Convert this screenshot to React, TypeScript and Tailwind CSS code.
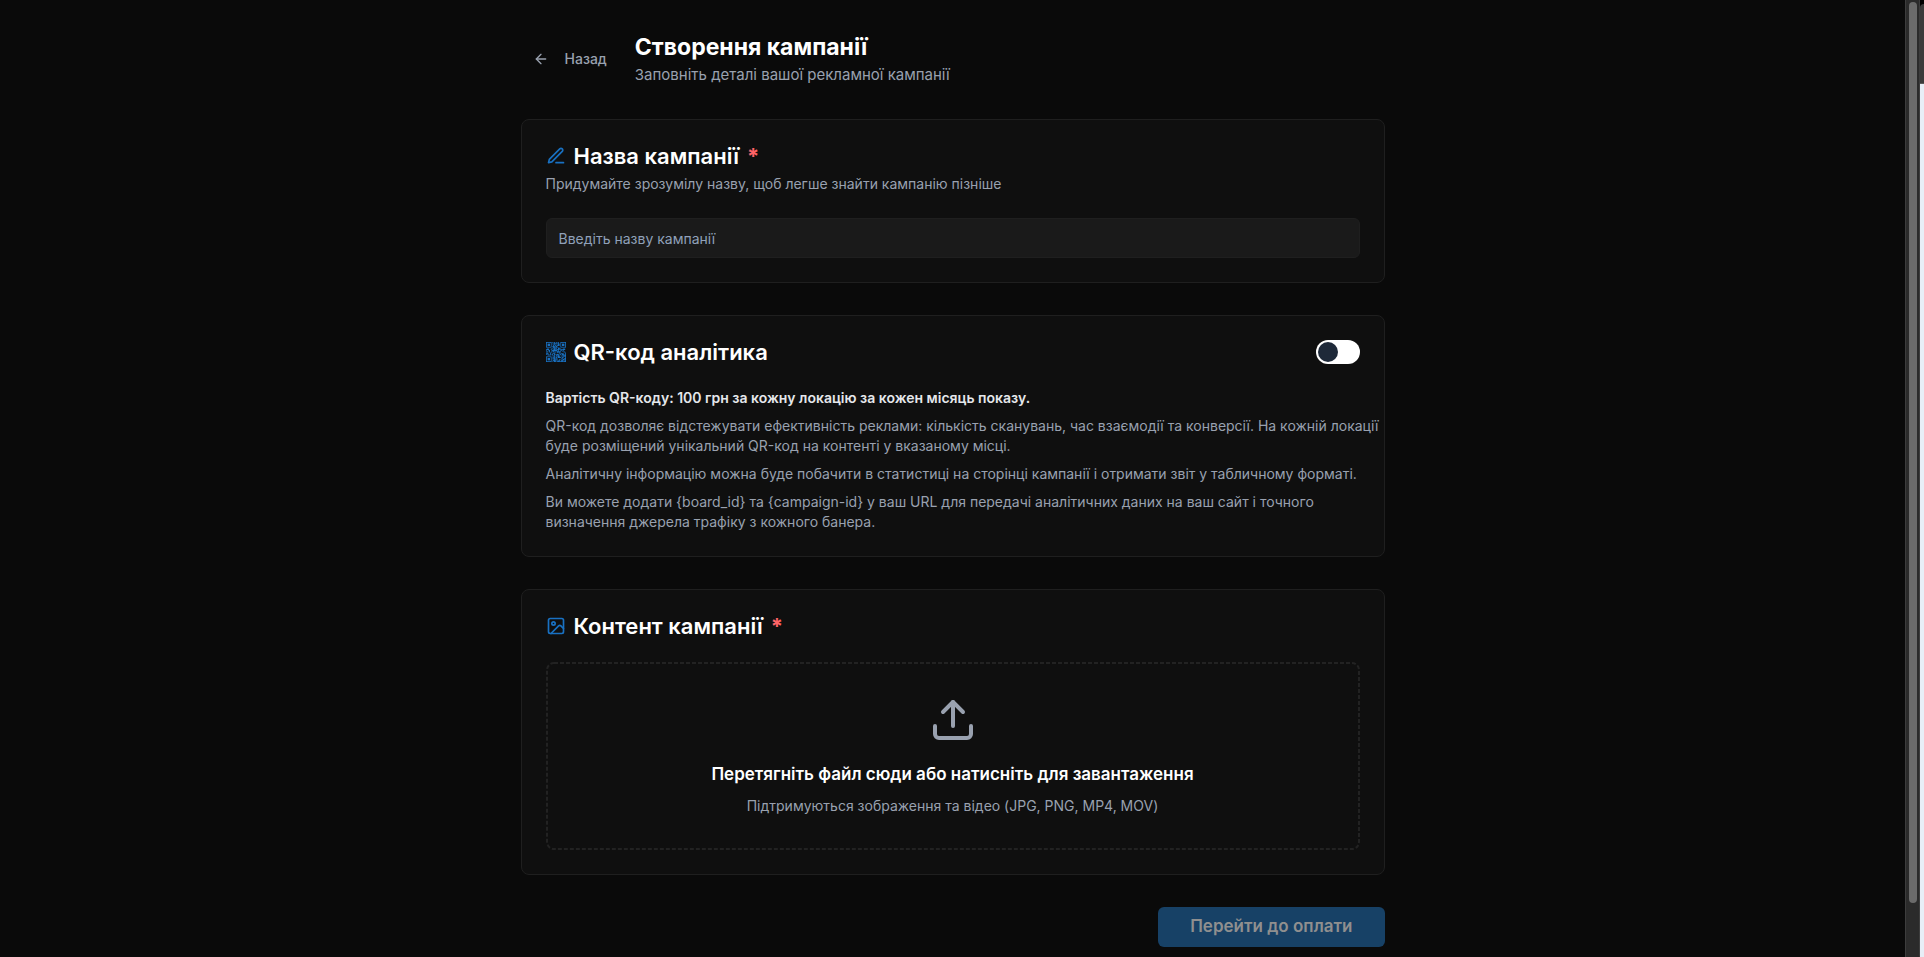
import { useRef, useState } from "react";
import type { ReactNode } from "react";
import { ArrowLeft, Upload } from "lucide-react";

const FINDERS = [
  [0, 0],
  [18, 0],
  [0, 18],
];

function inFinder(x: number, y: number) {
  return FINDERS.some(([fx, fy]) => x >= fx - 1 && x <= fx + 7 && y >= fy - 1 && y <= fy + 7);
}

function QrIcon() {
  const cells: string[] = [];
  for (let y = 0; y < 25; y++) {
    for (let x = 0; x < 25; x++) {
      if (!inFinder(x, y) && (x * 7 + y * 13 + x * y * 3 + ((x * x) ^ (y * 5))) % 5 < 3) {
        cells.push(`M${x} ${y}h1v1h-1z`);
      }
    }
  }
  return (
    <svg viewBox="0 0 25 25" className="size-5 shrink-0 text-[#1971c2]" fill="currentColor" aria-hidden="true">
      {FINDERS.map(([x, y]) => (
        <g key={`${x}-${y}`}>
          <rect x={x + 0.5} y={y + 0.5} width="6" height="6" fill="none" stroke="currentColor" />
          <rect x={x + 2} y={y + 2} width="3" height="3" />
        </g>
      ))}
      <path d={cells.join("")} />
    </svg>
  );
}

function StrokeIcon({ children }: { children: ReactNode }) {
  return (
    <svg
      viewBox="0 0 24 24"
      className="size-5 shrink-0 text-[#1971c2]"
      fill="none"
      stroke="currentColor"
      strokeWidth="2"
      strokeLinecap="round"
      strokeLinejoin="round"
      aria-hidden="true"
    >
      {children}
    </svg>
  );
}

function Card({ children }: { children: ReactNode }) {
  return (
    <section className="flex flex-col gap-6 rounded-lg border border-[#1f1f1f] bg-[#0f0f0f] p-6">{children}</section>
  );
}

function CardTitle({ icon, children, required }: { icon: ReactNode; children: ReactNode; required?: boolean }) {
  return (
    <h2 className="flex items-center gap-2 text-[22px] leading-6 font-semibold text-white">
      {icon}
      <span>{children}</span>
      {required && <span className="font-bold text-red-400">*</span>}
    </h2>
  );
}

export default function App() {
  const [name, setName] = useState("");
  const [qr, setQr] = useState(false);
  const fileRef = useRef<HTMLInputElement>(null);

  return (
    <div className="flex h-screen bg-[#0a0a0a] font-['Inter','Noto_Sans',sans-serif] text-white">
      <main className="min-w-0 flex-1 overflow-hidden">
        <div className="mx-auto flex max-w-4xl flex-col gap-8 px-4 pt-[31px]">
          <header className="flex items-center gap-4">
            <button type="button" className="flex h-9 items-center gap-4 px-3 text-sm font-medium text-gray-400">
              <ArrowLeft className="size-4" />
              Назад
            </button>
            <div>
              <h1 className="text-[23px] leading-8 font-bold">Створення кампанії</h1>
              <p className="text-[15px] leading-6 text-gray-400">Заповніть деталі вашої рекламної кампанії</p>
            </div>
          </header>

          <Card>
            <div className="flex flex-col gap-1.5">
              <CardTitle
                required
                icon={
                  <StrokeIcon>
                    <path d="M12 20h9" />
                    <path d="M16.5 3.5a2.121 2.121 0 0 1 3 3L7 19l-4 1 1-4L16.5 3.5z" />
                  </StrokeIcon>
                }
              >
                <label htmlFor="campaign-name">Назва кампанії</label>
              </CardTitle>
              <p className="text-sm text-gray-400">Придумайте зрозумілу назву, щоб легше знайти кампанію пізніше</p>
            </div>
            <input
              id="campaign-name"
              type="text"
              value={name}
              onChange={(e) => setName(e.target.value)}
              placeholder="Введіть назву кампанії"
              className="h-10 w-full rounded-md border border-[#1f1f1f] bg-[#1a1a1a] px-3 text-sm text-white outline-none placeholder:text-slate-400"
            />
          </Card>

          <Card>
            <div className="flex items-center justify-between">
              <CardTitle icon={<QrIcon />}>
                <label htmlFor="qr-switch">QR-код аналітика</label>
              </CardTitle>
              <input
                id="qr-switch"
                type="checkbox"
                role="switch"
                checked={qr}
                onChange={(e) => setQr(e.target.checked)}
                className="flex h-6 w-11 cursor-pointer appearance-none items-center rounded-full bg-white p-0.5 before:size-5 before:rounded-full before:bg-gray-800 checked:bg-[#1971c2] checked:before:translate-x-5"
              />
            </div>
            <div className="-mr-6 flex flex-col gap-2 text-sm text-gray-400">
              <p className="font-semibold text-gray-200">Вартість QR-коду: 100 грн за кожну локацію за кожен місяць показу.</p>
              <p>
                QR-код дозволяє відстежувати ефективність реклами: кількість сканувань, час взаємодії та конверсії. На
                кожній локації буде розміщений унікальний QR-код на контенті у вказаному місці.
              </p>
              <p>
                Аналітичну інформацію можна буде побачити в статистиці на сторінці кампанії і отримати звіт у табличному
                форматі.
              </p>
              <p>
                {
                  "Ви можете додати {board_id} та {campaign-id} у ваш URL для передачі аналітичних даних на ваш сайт і точного визначення джерела трафіку з кожного банера."
                }
              </p>
            </div>
          </Card>

          <Card>
            <CardTitle
              required
              icon={
                <StrokeIcon>
                  <rect x="3" y="3" width="18" height="18" rx="2" />
                  <circle cx="9" cy="9" r="2" />
                  <path d="m21 15-3.086-3.086a2 2 0 0 0-2.828 0L6 21" />
                </StrokeIcon>
              }
            >
              Контент кампанії
            </CardTitle>
            <button
              type="button"
              onClick={() => fileRef.current?.click()}
              className="relative flex flex-col items-center rounded-lg border-2 border-transparent p-8"
            >
              <svg className="absolute -inset-px size-[calc(100%+2px)] overflow-visible text-[#222222]" fill="none" aria-hidden="true">
                <rect width="100%" height="100%" rx="7" stroke="currentColor" strokeWidth="2" strokeDasharray="4 2" />
              </svg>
              <Upload className="mb-4 size-12 text-gray-400" />
              <span className="mb-2 text-[17px] leading-7 font-semibold">Перетягніть файл сюди або натисніть для завантаження</span>
              <span className="text-sm text-gray-400">Підтримуються зображення та відео (JPG, PNG, MP4, MOV)</span>
            </button>
            <input ref={fileRef} type="file" accept="image/*,video/*" aria-label="Файл кампанії" className="hidden" />
          </Card>

          <div className="flex justify-end">
            <button
              type="button"
              disabled
              className="h-10 rounded-md bg-[#174166] px-8 text-[17px] font-semibold text-[#8f8f8f]"
            >
              Перейти до оплати
            </button>
          </div>
        </div>
      </main>
      <div className="flex w-[15px] shrink-0 flex-col items-center border-x border-[#3d3d3d] bg-[#2b2b2b] pt-0.5" aria-hidden="true">
        <div className="h-[94.3%] w-2 rounded-full bg-[#6b6b6b]" />
      </div>
      <div className="flex w-1 shrink-0 flex-col bg-[#e8eef7]" aria-hidden="true">
        <div className="h-[84px] border-b border-[#5a5a5a] bg-black pt-1">
          <div className="h-full rounded-tl-lg bg-[#3b3b3b]" />
        </div>
      </div>
    </div>
  );
}
